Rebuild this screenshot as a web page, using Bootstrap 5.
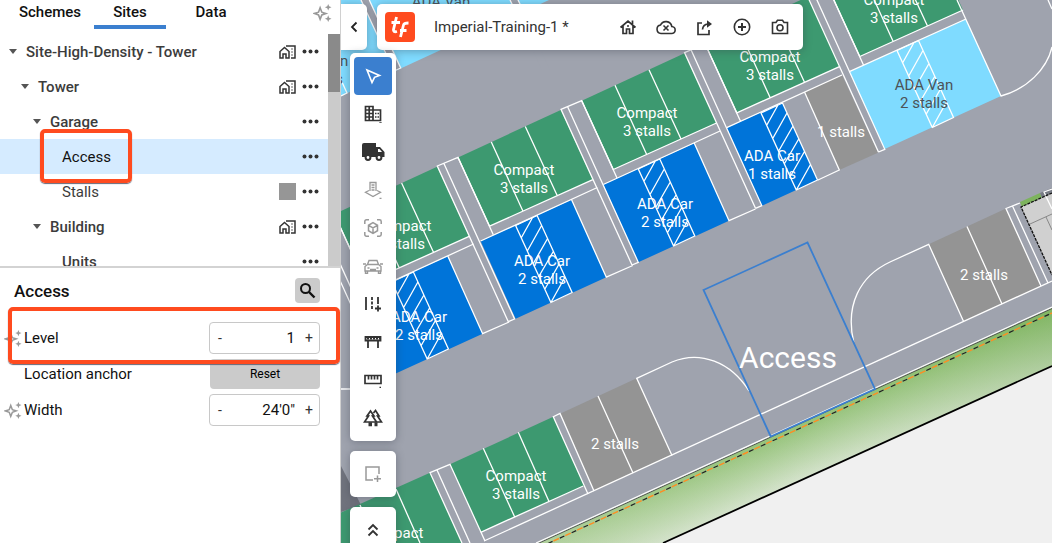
<!DOCTYPE html>
<html lang="en">
<head>
<meta charset="utf-8">
<meta name="viewport" content="width=device-width, initial-scale=1">
<title>Imperial-Training-1</title>
<link href="https://cdn.jsdelivr.net/npm/bootstrap@5.3.0/dist/css/bootstrap.min.css" rel="stylesheet">
<style>
  body { font-family: Roboto, "Liberation Sans", sans-serif; font-size: 15px; line-height: 20px; color: #111; }
  svg { display: block; }
  .side { width: 341px; border-right: 1px solid #d0d0d0; }
  .tree-pane { box-sizing: content-box; flex: 0 0 49%; min-height: 0; border-bottom: 2px solid #d3d3d3; }
  .tabs { height: 34px; padding-left: 6px; }
  .tab-link { width: 90px; height: 29px; padding-top: 2px; font-weight: 500; color: #111; text-align: center; text-decoration: none; border-bottom: 4px solid transparent; }
  .tab-link.current { width: 72px; border-color: #3b7fcf; }
  .tab-link:first-child { width: 88px; }
  .spark-btn { height: 24px; margin-right: 8px; }
  .tree-row { height: 35px; font-weight: 500; color: #3c3c3c; padding-right: 9px; }
  .tree-row.selected { background: #d5ebff; color: #111; }
  .leaf { font-weight: 400; }
  .lv0 { padding-left: 9px; } .lv1 { padding-left: 21px; } .lv2 { padding-left: 33px; } .lv3 { padding-left: 62px; }
  .caret { width: 8px; height: 5px; margin-right: 9px; background: #555; clip-path: polygon(0 0, 100% 0, 50% 100%); }
  .swatch { width: 17px; height: 17px; background: #969696; }
  .row-mark { margin-right: 6px; }
  .icon-btn { border: 0; background: none; padding: 0; color: #333; display: flex; flex-shrink: 0; align-items: center; justify-content: center; }
  .muted-icon { color: #999; }
  .track { width: 12px; background: #cbcbcb; }
  .thumb { height: 25%; background: #8a8a8a; }
  .props { padding: 4px 20px 0 4px; }
  .props-head { height: 48px; padding-left: 10px; padding-bottom: 11px; }
  .props-title { font-size: 17px; font-weight: 500; line-height: 20px; }
  .search-btn { width: 25px; height: 25px; background: #cbcbcb; border-radius: 4px; color: #111; }
  .prop-row { height: 36px; }
  .prop-icon { width: 20px; color: #999; }
  .stepper { width: 111px; height: 32px; border: 1px solid #c8c8c8; border-radius: 4px; background: #fff; }
  .stepper input { min-width: 0; border: 0; outline: 0; text-align: right; padding: 0; color: #111; background: none; }
  .stepper button { width: 20px; font-size: 14px; }
  .reset-btn { width: 110px; height: 30px; border: 0; border-radius: 4px; background: #cbcbcb; font-size: 12px; }
  .callout { border: 4px solid #ff4b1f; border-radius: 5px; box-shadow: 0 1px 1px #667; pointer-events: none; }
  .callout-item { left: 40px; top: 129px; width: 92px; height: 54px; }
  .callout-level { left: 8px; top: 307px; width: 332px; height: 57px; }
  .plan { background: #9fa3ae; }
  .plan text { fill: #fff; text-anchor: middle; font-size: 15px; }
  .plan .dark-text text { fill: #4c5358; }
  .plan .big-text { font-size: 30px; }
  .panel-box { background: #fff; border-radius: 5px; box-shadow: 0 1px 8px rgba(50,55,70,.4); }
  .top-tools { top: 4px; left: 0; height: 46px; gap: 10px; }
  .collapse-btn { width: 26px; border-radius: 0 5px 5px 0; }
  .title-bar { width: 426px; padding: 0 8px; }
  .logo { width: 30px; height: 30px; background: #ff4b1f; border-radius: 4px; margin-right: 19px; }
  .doc-title { color: #333; }
  .bar-btn { width: 30px; height: 30px; }
  .left-tools { top: 53px; left: 9px; width: 46px; gap: 10px; }
  .left-tools .panel-box { padding: 4px; }
  .tool { width: 38px; height: 38px; border-radius: 4px; }
  .tool.active { background: #3b7fcf; color: #fff; }
  .tool.faded { color: #999; }
</style>
</head>
<body class="vh-100 overflow-hidden">
<svg width="0" height="0" class="position-absolute" aria-hidden="true">
  <defs>
    <symbol id="i-spark" viewBox="0 0 20 20"><path d="M7.500 5 9.300 9.700 13.500 11 9.300 12.500 7.500 17 5.800 12.500 1.500 11 5.800 9.700Z" fill="none" stroke="currentColor" stroke-width="1.700"/><path d="M16 1l1 2.500L19.500 4.500 17 5.500 16 8 15 5.500 12.500 4.500 15 3.500ZM16 13l1 2.500 2.500 1-2.500 1-1 2.500-1-2.500-2.500-1 2.500-1Z" fill="currentColor"/></symbol>
    <symbol id="i-site" viewBox="0 0 17 14"><path d="M1 13V6.500L5.500 2.500 10 6.500V13H7V9H4V13ZM7 1H16V13H12M12.500 4h1M12.500 7h1M12.500 10h1" fill="none" stroke="currentColor" stroke-width="1.500"/></symbol>
    <symbol id="i-dots" viewBox="0 0 17 5"><g fill="currentColor"><circle cx="2.500" cy="2.500" r="2"/><circle cx="8.500" cy="2.500" r="2"/><circle cx="14.500" cy="2.500" r="2"/></g></symbol>
  </defs>
</svg>
<div class="d-flex h-100 position-relative">
  <aside class="side d-flex flex-column flex-shrink-0 bg-white">
    <div class="tree-pane d-flex flex-column">
      <nav class="tabs d-flex flex-shrink-0">
        <a class="tab-link" href="#schemes">Schemes</a>
        <a class="tab-link current" href="#sites">Sites</a>
        <a class="tab-link" href="#data">Data</a>
        <button class="icon-btn muted-icon spark-btn ms-auto" aria-label="Suggestions"><svg width="19" height="19"><use href="#i-spark"/></svg></button>
      </nav>
      <div class="d-flex flex-fill overflow-hidden">
        <div class="flex-fill overflow-hidden">
          <div class="tree-row lv0 d-flex align-items-center"><span class="caret"></span><span class="me-auto">Site-High-Density - Tower</span><button class="icon-btn row-mark" aria-label="Site"><svg width="17" height="14"><use href="#i-site"/></svg></button><button class="icon-btn" aria-label="More"><svg width="17" height="5"><use href="#i-dots"/></svg></button></div>
          <div class="tree-row lv1 d-flex align-items-center"><span class="caret"></span><span class="me-auto">Tower</span><button class="icon-btn row-mark" aria-label="Site"><svg width="17" height="14"><use href="#i-site"/></svg></button><button class="icon-btn" aria-label="More"><svg width="17" height="5"><use href="#i-dots"/></svg></button></div>
          <div class="tree-row lv2 d-flex align-items-center"><span class="caret"></span><span class="me-auto">Garage</span><button class="icon-btn" aria-label="More"><svg width="17" height="5"><use href="#i-dots"/></svg></button></div>
          <div class="tree-row lv3 leaf selected d-flex align-items-center"><span class="me-auto">Access</span><button class="icon-btn" aria-label="More"><svg width="17" height="5"><use href="#i-dots"/></svg></button></div>
          <div class="tree-row lv3 leaf d-flex align-items-center"><span class="me-auto">Stalls</span><span class="swatch row-mark"></span><button class="icon-btn" aria-label="More"><svg width="17" height="5"><use href="#i-dots"/></svg></button></div>
          <div class="tree-row lv2 d-flex align-items-center"><span class="caret"></span><span class="me-auto">Building</span><button class="icon-btn row-mark" aria-label="Site"><svg width="17" height="14"><use href="#i-site"/></svg></button><button class="icon-btn" aria-label="More"><svg width="17" height="5"><use href="#i-dots"/></svg></button></div>
          <div class="tree-row lv3 d-flex align-items-center"><span class="me-auto">Units</span><button class="icon-btn" aria-label="More"><svg width="17" height="5"><use href="#i-dots"/></svg></button></div>
        </div>
        <div class="track flex-shrink-0"><div class="thumb"></div></div>
      </div>
    </div>
    <section class="props">
      <div class="props-head d-flex align-items-center justify-content-between">
        <h2 class="props-title m-0">Access</h2>
        <button class="icon-btn search-btn" aria-label="Search"><svg width="17" height="17" viewBox="0 0 17 17" fill="none" stroke="currentColor"><circle cx="6.500" cy="6.500" r="4.500" stroke-width="2"/><path d="M10 10l5.500 5.500" stroke-width="2.400"/></svg></button>
      </div>
      <div class="prop-row d-flex align-items-center"><span class="prop-icon"><svg width="18" height="18"><use href="#i-spark"/></svg></span><label class="me-auto" for="level">Level</label>
        <div class="stepper d-flex align-items-center"><button class="icon-btn" aria-label="Decrease level">-</button><input id="level" class="flex-fill" value="1"><button class="icon-btn ms-1" aria-label="Increase level">+</button></div></div>
      <div class="prop-row d-flex align-items-center"><span class="prop-icon"></span><span class="me-auto">Location anchor</span><button class="reset-btn">Reset</button></div>
      <div class="prop-row d-flex align-items-center"><span class="prop-icon"><svg width="18" height="18"><use href="#i-spark"/></svg></span><label class="me-auto" for="width">Width</label>
        <div class="stepper d-flex align-items-center"><button class="icon-btn" aria-label="Decrease width">-</button><input id="width" class="flex-fill" value="24'0&quot;"><button class="icon-btn ms-1" aria-label="Increase width">+</button></div></div>
    </section>
  </aside>

  <main class="plan flex-fill position-relative overflow-hidden">
    <svg width="100%" height="100%" viewBox="341 0 711 543" preserveAspectRatio="xMinYMin slice">
      <defs>
        <linearGradient id="grass" gradientUnits="userSpaceOnUse" x1="850" y1="400" x2="875" y2="454"><stop offset="0" stop-color="#8fc072"/><stop offset="1" stop-color="#e3eadf"/></linearGradient>
        <linearGradient id="grassFade" gradientUnits="userSpaceOnUse" x1="540" y1="0" x2="1052" y2="0"><stop offset="0" stop-color="#dfe8da" stop-opacity=".4"/><stop offset=".5" stop-color="#b4d29f" stop-opacity=".1"/><stop offset="1" stop-color="#5d9e3a" stop-opacity=".35"/></linearGradient>
        <g id="compact"><path d="M581.700 100.700 684.500 53.300 716.500 123 613.300 169.500Z" fill="#3d9970" stroke="none"/><path d="M716.500 123 613.300 169.500 581.700 100.700M615 85.300 646.700 154.500M649 69.700 681 139"/></g>
        <g id="walk"><path d="M632 265 561 109.300 581.700 100.700 617 178M567.500 106.500 638.300 262.300 632 265"/></g>
        <path id="hatch" d="M35.300 77 0 0 21.500-10 56.500 67ZM5.700 12.300 17-8M12 25 26 0M17.700 38 32 13M23.500 50.500 37.700 26M29.300 63.500 43.500 38.500M35.300 77 49.500 51.500"/>
        <g id="ada"><path d="M603.300 184.500 694.300 143.300 729 220.700 638.300 262.300Z" fill="#0074d9" stroke="none"/><path d="M603.300 184.500 720 131M694.300 143.300 729 220.700 755.500 209"/><use href="#hatch" x="638.300" y="169"/></g>
      </defs>
      <path d="M341 0H549L400.700 68.500 341 96Z" fill="#7fdbff"/>
      <path d="M361 0H369.300L400.700 68 394 71ZM510 0H518L550 70H542Z" fill="#9fa3ae"/>
      <g fill="none" stroke="#fff" stroke-width="1.300">
        <path d="M361 0 394 71 400.700 68 369.300 0M510 0 514 8M518 0 522 8M341 80 347 93 341 96M341 389H351"/>
        <use href="#compact" x="-247.400" y="113.400"/><use href="#compact" x="-123.700" y="56.700"/><use href="#compact"/><use href="#compact" x="123.500" y="-56.700"/><use href="#compact" x="246.500" y="-113"/>
        <use href="#ada" x="-246.400" y="113"/><use href="#ada" x="-122.700" y="56.500"/><use href="#ada"/>
        <path d="M726.700 127.700 782.300 102.700 818 180 761.700 206Z" fill="#0074d9" stroke="none"/>
        <path d="M804.500 92 842 75 878 152.700 839.300 170Z" fill="#949494" stroke="none"/>
        <path d="M726.700 127.700 842 75M804.500 92 839.300 170 818 180"/>
        <use href="#hatch" x="761" y="113"/>
        <path d="M849.300 71.700 966 19 1001 96 884.700 149Z" fill="#7fdbff" stroke="none"/>
        <path d="M849.300 71.700 966 19M957 0 1001 96C1027 89 1047 69 1052 47M1048 0 1052 9"/>
        <use href="#hatch" x="897" y="50.500"/>
        <use href="#walk" x="-247.400" y="113.400"/><use href="#walk" x="-123.700" y="56.700"/><use href="#walk"/><use href="#walk" x="123.500" y="-56.700"/><use href="#walk" x="246.500" y="-113"/>

        <path d="M484 541 1052 281V308L538 543H480Z" fill="#9fa3ae" stroke="none"/>
        <path d="M341 466 361 505 341 512Z" fill="#70737d" stroke="none"/>
        <path d="M341 512.500 430 472.700 462 543H341Z" fill="#3d9970" stroke="none"/>
        <path d="M450 464.300 553.300 416.700 584.300 486 480.700 532.300Z" fill="#3d9970" stroke="none"/>
        <path d="M462 543 430 472.700 450 464.300 485 541M396 489 420 543M437 470 470 543M360 505 377 543"/>
        <path d="M483.300 448.300 514.700 517M518.300 432.300 549 501.500M480.700 532.300 583.300 486"/>
        <path d="M560.500 413.500 636.700 378.300 672 455.500 594 491Z" fill="#949494" stroke="none"/>
        <path d="M588 494 553.300 416.700 560 413.500 594 491M598 396 633 473M672 455.500 636.700 378.300 672 362C700 350 731 362 749 391"/>
        <path d="M928.700 244.300 1006 208.500 1041 286 963.700 321.700Z" fill="#949494" stroke="none"/>
        <path d="M967 226.500 1002 304M963.700 321.700 928.700 244.300 890 262C860 276 845 305 853.700 342M1041 286 1006 208.500 1020 203M1012.500 206 1048 283"/>
        <path d="M484 541 1052 281"/>
      </g>
      <path d="M1020 202 1040 193 1042 198 1022 207Z" fill="#7db35d"/><path d="M1040 193 1052 188V195L1042 198Z" fill="#777b84"/>
      <path d="M1021 207 1052 193V275Z" fill="#d0d0d0"/>
      <path d="M1030 224 1052 214M1046 217 1052 230" stroke="#888" fill="none"/>
      <path d="M1052 189 1044 192 1052 209" stroke="#fff" stroke-width="1.300" fill="none"/>
      <path d="M1052 193 1021 207 1052 275" stroke="#111" stroke-width="1.300" stroke-dasharray="3 1" fill="none"/>
      <path d="M538 543 1052 308V543Z" fill="#f0f0f0"/>
      <path d="M538 543 1052 308V366L663 543Z" fill="url(#grass)"/><path d="M538 543 1052 308V366L663 543Z" fill="url(#grassFade)"/>
      <path d="M663 543 1052 366" stroke="#000" stroke-width="1.800"/>
      <path d="M538 543.500 1052 308.500" stroke="#555"/><path d="M536 543 1052 307" stroke="#fff" stroke-width="1.200"/>
      <path d="M548 543.500 1052 313" stroke="#222" stroke-width="1.200" stroke-dasharray="5 8"/><path d="M548 543.500 1052 313" stroke="#ff8c22" stroke-width="1.400" stroke-dasharray="6 7" stroke-dashoffset="-6"/>
      <path d="M703.500 290 807.500 242.500 875 389 770.700 436.500Z" fill="none" stroke="#3b7fcf" stroke-width="1.800"/>
      <g>
        <text x="401" y="231">Compact</text><text x="401" y="249">3 stalls</text>
        <text x="524" y="175">Compact</text><text x="524" y="193">3 stalls</text>
        <text x="647" y="118">Compact</text><text x="647" y="136">3 stalls</text>
        <text x="770" y="62">Compact</text><text x="770" y="80">3 stalls</text>
        <text x="894" y="5">Compact</text><text x="894" y="23">3 stalls</text>
        <text x="419" y="322">ADA Car</text><text x="419" y="340">2 stalls</text>
        <text x="542" y="266">ADA Car</text><text x="542" y="284">2 stalls</text>
        <text x="665" y="209">ADA Car</text><text x="665" y="227">2 stalls</text>
        <text x="772" y="161">ADA Car</text><text x="772" y="179">1 stalls</text>
        <text x="841" y="137">1 stalls</text><text x="984" y="280">2 stalls</text><text x="615" y="449">2 stalls</text>
        <text x="516" y="481">Compact</text><text x="516" y="499">3 stalls</text><text x="393" y="538">Compact</text>
        <text class="big-text" x="788" y="368">Access</text>
      </g>
      <g class="dark-text"><text x="924" y="90">ADA Van</text><text x="924" y="108">2 stalls</text><text x="441" y="7">ADA Van</text><text x="319" y="66">ADA Van</text><text x="319" y="84">2 stalls</text></g>
    </svg>

    <div class="top-tools position-absolute d-flex">
      <button class="icon-btn panel-box collapse-btn" aria-label="Collapse"><svg width="8" height="12" viewBox="0 0 8 12" fill="none" stroke="#222" stroke-width="1.800"><path d="M6.500 1.500 2 6l4.500 4.500"/></svg></button>
      <header class="panel-box title-bar d-flex align-items-center">
        <span class="logo"><svg width="30" height="30" viewBox="0 0 30 30" fill="none" stroke="#fff" stroke-width="2.800"><path d="M11.500 5 8.500 17.500Q8 20.500 12 19.500M6.500 10.500H15"/><path d="M15.500 25 18.500 13Q19 11 23.500 11M15 18.500H21.500"/></svg></span>
        <span class="doc-title me-auto">Imperial-Training-1 *</span>
        <div class="d-flex gap-2">
          <button class="icon-btn bar-btn" aria-label="Home"><svg width="18" height="18" viewBox="0 0 18 18" fill="none" stroke="currentColor" stroke-width="1.700"><path d="M1.500 9.500 9 3l7.500 6.500M13.500 6V2.500M4 8v7.500h3.500V11h3v4.500H14V8M8 8h2"/></svg></button>
          <button class="icon-btn bar-btn" aria-label="Offline"><svg width="20" height="16" viewBox="0 0 20 16" fill="none" stroke="currentColor" stroke-width="1.600"><path d="M5 14.500H15.500A3.500 3.500 0 0 0 15.800 7.500 6 6 0 0 0 4.500 6 4.300 4.300 0 0 0 5 14.500ZM7.500 6.500l5 5M12.500 6.500l-5 5"/></svg></button>
          <button class="icon-btn bar-btn" aria-label="Share"><svg width="17" height="17" viewBox="0 0 17 17" fill="none" stroke="currentColor" stroke-width="1.700"><path d="M6 4H2V15.500H13V11M6.500 10.500Q7 5.500 12 5"/><path d="M11 1.200 16 5 11 8.800Z" fill="currentColor" stroke="none"/></svg></button>
          <button class="icon-btn bar-btn" aria-label="Add"><svg width="18" height="18" viewBox="0 0 18 18" fill="none" stroke="currentColor" stroke-width="1.600"><circle cx="9" cy="9" r="7.700"/><path d="M9 5v8M5 9h8" stroke-width="2"/></svg></button>
          <button class="icon-btn bar-btn" aria-label="Camera"><svg width="18" height="16" viewBox="0 0 18 16" fill="none" stroke="currentColor" stroke-width="1.600"><path d="M1.500 3.500H5L6.500 1.300h5L13 3.500h3.500v11h-15Z"/><circle cx="9" cy="8.700" r="3"/></svg></button>
        </div>
      </header>
    </div>

    <div class="left-tools position-absolute d-flex flex-column">
      <div class="panel-box">
        <button class="icon-btn tool active" aria-label="Select"><svg width="18" height="18" viewBox="0 0 18 18" fill="none" stroke="currentColor" stroke-width="1.600"><path d="M3 3 15.500 8.500 10.500 10.300 8 15.500Z"/></svg></button>
        <button class="icon-btn tool" aria-label="Buildings"><svg width="18" height="18" viewBox="0 0 18 18" fill="none" stroke="currentColor" stroke-width="1.700"><path d="M1.500 1.500H9V15.500H1.500ZM5.200 1.500V15.500M1.500 5H9M1.500 8.500H9M1.500 12H9M9 5H16.500V15.500H9"/><path d="M11 8.500h4M11 12h4" stroke-dasharray="1.500 1"/><path d="M15 18h2v-1" stroke-width="1"/></svg></button>
        <button class="icon-btn tool" aria-label="Trucks"><svg width="23" height="18" viewBox="0 0 23 18"><path d="M2 0H14V4H18L22.500 9V14H0V2Q0 0 2 0Z" fill="currentColor"/><path d="M16 6h1.500L20 9h-4Z" fill="#fff"/><g fill="#fff" stroke="currentColor" stroke-width="2"><circle cx="6" cy="14.500" r="2.400"/><circle cx="17" cy="14.500" r="2.400"/></g></svg></button>
        <button class="icon-btn tool faded" aria-label="Place building"><svg width="18" height="18" viewBox="0 0 18 18" fill="none" stroke="currentColor" stroke-width="1.300"><path d="M6 10V1.500h6V10M7.500 4h3M7.500 6.500h3M7.500 9h3M5 9.500 1.500 11.200 9 15.500l7.500-4.300L13 9.500M15.500 17.500h2"/></svg></button>
        <button class="icon-btn tool faded" aria-label="3D view"><svg width="18" height="18" viewBox="0 0 18 18" fill="none" stroke="currentColor" stroke-width="1.500"><path d="M.8 5V2.500Q.8.800 2.500.800H5M13 .8h2.500q1.700 0 1.700 1.700V5M17.200 13v2.500q0 1.700-1.700 1.700H13M5 17.200H2.500Q.8 17.200.8 15.500V13M9 3.700 13.500 6.300V11.700L9 14.300 4.500 11.700V6.300ZM4.500 6.300 9 9l4.500-2.700M9 9v5"/></svg></button>
        <button class="icon-btn tool faded" aria-label="Parking"><svg width="20" height="15" viewBox="0 0 20 15" fill="none" stroke="currentColor" stroke-width="1.400"><path d="M2 12V7.500L4.500 5.500H15.500L18 7.500V12ZM4.500 5.500 6 1.500h8l1.500 4M2.500 12v2.500h2V12M15.500 12v2.500h2V12M0 5h3M17 5h3M4.500 9h2M13.500 9h2M7 10.500h6"/></svg></button>
        <button class="icon-btn tool" aria-label="Add lane"><svg width="18" height="18" viewBox="0 0 18 18" fill="none" stroke="currentColor" stroke-width="1.800"><path d="M2 2V15M14 2V9M14 10.500v6M11 13.500h6"/><path d="M8 2V15" stroke-dasharray="3 1.500"/></svg></button>
        <button class="icon-btn tool" aria-label="Barrier"><svg width="18" height="14" viewBox="0 0 18 14" fill="none" stroke="currentColor" stroke-width="1.800"><path d="M1.500 2H16.500V5.500H1.500ZM4 5.500V13M14 5.500V13"/><path d="M3 3.700h13" stroke-dasharray="2 1"/></svg></button>
        <button class="icon-btn tool" aria-label="Measure"><svg width="18" height="16" viewBox="0 0 18 16" fill="none" stroke="currentColor" stroke-width="1.700"><path d="M1 3.500H17V11.500H1ZM4.500 4v3.500M7.500 4v3.500M10.500 4v3.500M13.500 4v3.500"/><path d="M15.500 15.500h1.500"/></svg></button>
        <button class="icon-btn tool" aria-label="Trees"><svg width="20" height="18" viewBox="0 0 20 18" fill="none" stroke="currentColor" stroke-width="1.700"><path d="M7.500 2 4 7H5.500L1.500 13H13.500L9.500 7H11ZM10.500 4 12.500 1.500 16 7H14.500L18.500 13H13.500"/><path d="M5.500 15.300H9M11.500 15.300H14.500" stroke-width="4"/></svg></button>
      </div>
      <div class="panel-box"><button class="icon-btn tool faded" aria-label="Add area"><svg width="18" height="18" viewBox="0 0 18 18" fill="none" stroke="currentColor" stroke-width="1.500"><path d="M9 15H2V2H15V9M13.500 10.500v6.500M10 13.700h7"/></svg></button></div>
      <div class="panel-box"><button class="icon-btn tool" aria-label="Expand"><svg width="12" height="14" viewBox="0 0 12 14" fill="none" stroke="currentColor" stroke-width="1.800"><path d="M1.500 6.500 6 2l4.500 4.500M1.500 12.500 6 8l4.500 4.500"/></svg></button></div>
    </div>
  </main>
  <div class="callout callout-item position-absolute"></div>
  <div class="callout callout-level position-absolute"></div>
</div>
<script src="https://cdn.jsdelivr.net/npm/bootstrap@5.3.0/dist/js/bootstrap.bundle.min.js"></script>
</body>
</html>
